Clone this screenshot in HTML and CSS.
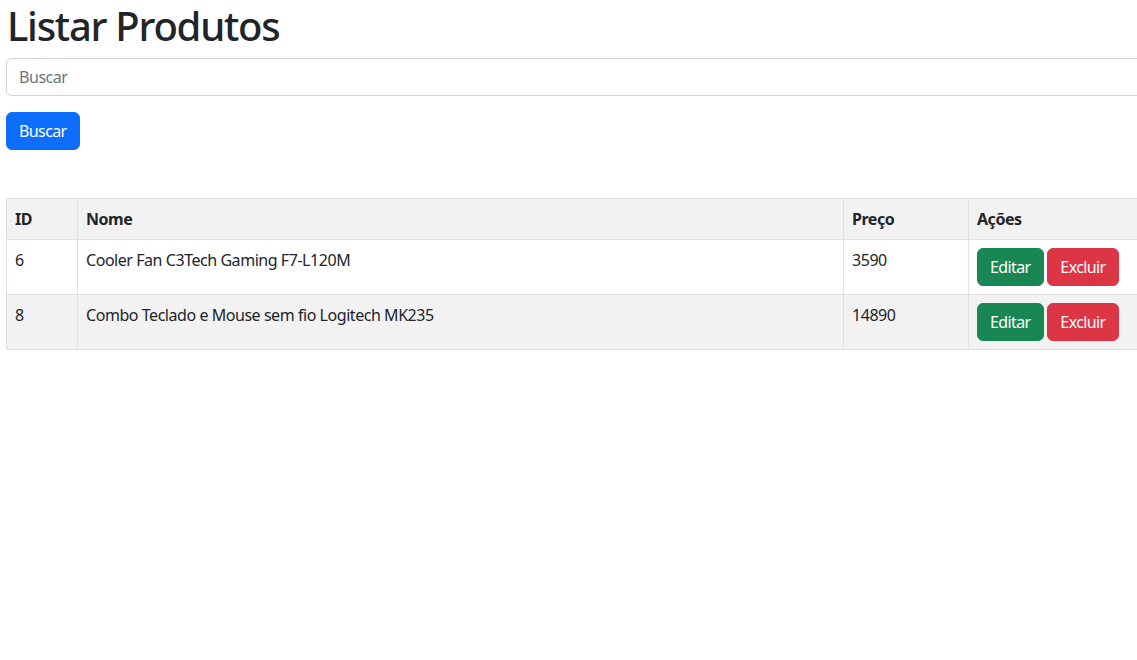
FILE: index.html
```html
<!DOCTYPE html>
<html lang="pt-BR">
<head>
<meta charset="utf-8">
<title>Listar Produtos</title>
<link rel="stylesheet" href="styles.css">
</head>
<body>
<div class="page">
  <h1 class="title">Listar Produtos</h1>
  <form class="search">
    <input class="search-input" type="text" placeholder="Buscar">
    <button class="btn btn-primary" type="button">Buscar</button>
  </form>
  <table class="table">
    <colgroup>
      <col class="col-id">
      <col class="col-nome">
      <col class="col-preco">
      <col class="col-acoes">
    </colgroup>
    <thead>
      <tr><th>ID</th><th>Nome</th><th>Preço</th><th>Ações</th></tr>
    </thead>
    <tbody>
      <tr class="row-plain">
        <td>6</td><td>Cooler Fan C3Tech Gaming F7-L120M</td><td>3590</td>
        <td><button class="btn btn-success" type="button">Editar</button> <button class="btn btn-danger" type="button">Excluir</button></td>
      </tr>
      <tr class="row-striped">
        <td>8</td><td>Combo Teclado e Mouse sem fio Logitech MK235</td><td>14890</td>
        <td><button class="btn btn-success" type="button">Editar</button> <button class="btn btn-danger" type="button">Excluir</button></td>
      </tr>
    </tbody>
  </table>
</div>
</body>
</html>
```

FILE: styles.css
```css
html, body {
  margin: 0;
  padding: 0;
  overflow: hidden;
  background: #fff;
}
body {
  font-family: "Noto Sans", "Open Sans", sans-serif;
  font-size: 16px;
  line-height: 1.5;
  letter-spacing: -0.45px;
  color: #212529;
}
.page {
  width: 1160px;
  padding: 2px 0 0 6px;
}
.title {
  margin: 0 0 8px 1px;
  font-size: 40px;
  font-weight: 500;
  line-height: 48px;
  letter-spacing: -1.25px;
}
.search {
  display: flex;
  flex-direction: column;
  align-items: flex-start;
  gap: 16px;
  margin: 0 0 48px 0;
}
.search-input {
  box-sizing: border-box;
  width: 100%;
  height: 38px;
  padding: 6px 12px;
  border: 1px solid #ced4da;
  border-radius: 6px;
  font-family: inherit;
  font-size: 16px;
  letter-spacing: -0.45px;
  color: #212529;
  outline: none;
}
.search-input::placeholder {
  color: #6c757d;
}
.btn {
  box-sizing: border-box;
  height: 38px;
  padding: 6px 12px;
  border: 1px solid transparent;
  border-radius: 6px;
  font-family: inherit;
  font-size: 16px;
  line-height: 24px;
  letter-spacing: -0.6px;
  color: #fff;
  cursor: pointer;
  vertical-align: top;
}
.btn-primary { background: #0d6efd; border-color: #0d6efd; }
.btn-success { background: #198754; border-color: #198754; }
.btn-danger { background: #dc3545; border-color: #dc3545; }
.table {
  width: 100%;
  border-collapse: collapse;
  table-layout: fixed;
}
.col-id { width: 71px; }
.col-nome { width: 766px; }
.col-preco { width: 125px; }
.col-acoes { width: 198px; }
.table th, .table td {
  border: 1px solid #dee2e6;
  padding: 8px;
  text-align: left;
  vertical-align: top;
}
.table th {
  font-weight: 700;
  background: #f2f2f2;
}
.row-plain td { background: #fff; }
.row-striped td { background: #f2f2f2; }
```
